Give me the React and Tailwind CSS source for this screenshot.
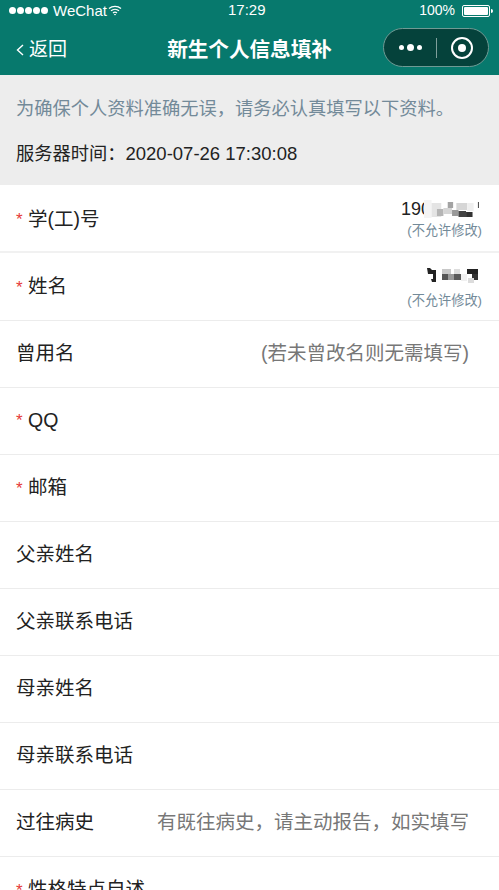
const CJK = '"Liberation Sans","Noto Sans CJK SC",sans-serif';

function Wifi() {
  return (
    <svg width="14" height="11" viewBox="0 0 14 11" fill="none" stroke="#fff" strokeWidth="1.3">
      <path d="M1 3.6C4.4.6 9.6.6 13 3.6" />
      <path d="M3 5.8c2.3-2 5.7-2 8 0" />
      <path d="M5 7.9c1.2-1 2.8-1 4 0" />
      <path d="M7 10.6 5.9 9.3c.6-.5 1.6-.5 2.2 0z" fill="#fff" stroke="none" />
    </svg>
  );
}

function StatusBar() {
  return (
    <div className="h-[20px] flex items-center justify-between pl-[9px] pr-[6px] text-white text-[14px] relative pt-[1px]">
      <div className="flex items-center">
        <div className="flex gap-[1px] mr-[5px]">
          {[0, 1, 2, 3, 4].map((i) => (
            <span key={i} className="w-[7px] h-[7px] rounded-full bg-white" />
          ))}
        </div>
        <span className="leading-none text-[15px]">WeChat</span>
        <span className="ml-[1px] flex"><Wifi /></span>
      </div>
      <span className="absolute left-[228px] top-[1px] text-[15px] leading-[18px]">17:29</span>
      <div className="flex items-center">
        <span className="mr-[7px]">100%</span>
        <div className="w-[28px] h-[12px] border border-white rounded-[2px] p-[1px] flex">
          <div className="flex-1 bg-white rounded-[1px]" />
        </div>
        <div className="w-[2px] h-[4px] bg-white ml-[1px] rounded-r-sm" />
      </div>
    </div>
  );
}

function NavBar() {
  return (
    <div className="h-[55px] flex items-center justify-between pl-[16px] pr-[10px] relative">
      <div className="flex items-center text-white text-[19px] gap-[5px] pt-[5px]">
        <svg width="8" height="12" viewBox="0 0 8 12" fill="none" stroke="#fff" strokeWidth="1.4"><path d="M7 1 1.5 6 7 11" /></svg>
        <span>返回</span>
      </div>
      <div className="absolute inset-x-0 top-0 h-[55px] flex items-center justify-center text-white text-[20.6px] font-bold pt-[5px]">新生个人信息填补</div>
      <div className="w-[106px] h-[39px] rounded-full bg-[#05423b] border border-[#6f9a94] flex items-center">
        <div className="flex items-center gap-[3px] ml-[15px]">
          <span className="w-[5px] h-[5px] rounded-full bg-white" />
          <span className="w-[7px] h-[7px] rounded-full bg-white" />
          <span className="w-[5px] h-[5px] rounded-full bg-white" />
        </div>
        <div className="w-px h-[20px] bg-[#7f9f9b] ml-[14px]" />
        <div className="ml-[14px] w-[22px] h-[22px] rounded-full border-[2.5px] border-white flex items-center justify-center">
          <span className="w-[8px] h-[8px] rounded-full bg-white" />
        </div>
      </div>
    </div>
  );
}

function Mosaic1() {
  return (
    <svg width="55" height="18" viewBox="0 0 51 18" preserveAspectRatio="none" className="-ml-[7px]">
      <rect x="0" y="0" width="7" height="18" fill="#f4f4f4" />
      <rect x="7" y="3" width="9" height="14" fill="#e4e4e4" />
      <rect x="12" y="9" width="6" height="7" fill="#b5b5b5" />
      <rect x="18" y="8" width="8" height="6" fill="#d5d5d5" />
      <rect x="22" y="2" width="5" height="6" fill="#a3a3a3" />
      <rect x="26" y="10" width="6" height="6" fill="#9a9a9a" />
      <rect x="30" y="3" width="10" height="7" fill="#d6d6d6" />
      <rect x="32" y="11" width="7" height="6" fill="#444444" />
      <rect x="39" y="12" width="6" height="5" fill="#333333" />
      <rect x="40" y="3" width="6" height="8" fill="#efefef" />
      <rect x="50" y="2" width="1" height="6" fill="#555555" />
    </svg>
  );
}

function Mosaic2() {
  return (
    <svg width="52" height="18" viewBox="0 0 52 18">
      <path d="M0 1h3l2 2h4v12H5l-1-3h2V7H1z" fill="#222222" />
      <rect x="15" y="2" width="9" height="5" fill="#c8c8c8" />
      <rect x="15" y="7" width="6" height="6" fill="#555555" />
      <rect x="21" y="7" width="6" height="6" fill="#999999" />
      <rect x="27" y="2" width="6" height="5" fill="#dddddd" />
      <rect x="27" y="7" width="7" height="6" fill="#5a5a5a" />
      <rect x="34" y="7" width="6" height="7" fill="#f0f0f0" />
      <rect x="40" y="2" width="11" height="5" fill="#222222" />
      <rect x="45" y="7" width="6" height="6" fill="#333333" />
      <rect x="41" y="11" width="6" height="5" fill="#dcdcdc" />
    </svg>
  );
}

function Row({ label, required, placeholder, locked, mosaic, prefix, h = 'h-[67px]', labelPad = 'pt-[0px]', noteGap = '', lockPad = '', border = 'border-b border-[#ececec]' }) {
  return (
    <div className={`${h} flex items-center justify-between pl-[16px] ${placeholder ? 'pr-[30px]' : 'pr-[17px]'} ${border} shrink-0`}>
      <div className={`flex items-center text-[19.5px] text-[#222222] leading-none ${labelPad}`}>
        {required && <span className="text-[#e5393a] w-[12px] text-[17px]">*</span>}
        <span>{label}</span>
      </div>
      {placeholder && <span className="text-[19.5px] text-[#777777]">{placeholder}</span>}
      {locked && (
        <div className={`flex flex-col items-end ${lockPad}`}>
          <div className="flex items-center h-[24px] text-[18px] text-[#222222] pr-[3px]">
            {prefix && <span className="leading-none">{prefix}</span>}
            {mosaic}
          </div>
          <span className={`text-[13.2px] text-[#738a99] leading-[18px] ${noteGap}`}>(不允许修改)</span>
        </div>
      )}
    </div>
  );
}

export default function App() {
  return (
    <div className="w-[499px] h-[890px] overflow-hidden bg-white flex flex-col" style={{ fontFamily: CJK }}>
      <header className="bg-[#07796d] h-[75px] shrink-0">
        <StatusBar />
        <NavBar />
      </header>
      <section className="bg-[#ededed] h-[110px] shrink-0 px-[16px] pt-[21px]">
        <p className="text-[18.25px] leading-[26px] text-[#738a99]">为确保个人资料准确无误，请务必认真填写以下资料。</p>
        <p className="text-[18.25px] leading-[26px] text-[#222222] mt-[19px]">服务器时间：<span className="text-[18.5px]">2020-07-26 17:30:08</span></p>
      </section>
      <Row required label="学(工)号" locked prefix="190" mosaic={<Mosaic1 />} h="h-[68px]" labelPad="pt-[3px]" noteGap="mt-[1px]" border="border-b-2 border-[#f1f1f1]" />
      <Row required label="姓名" locked mosaic={<Mosaic2 />} h="h-[68px]" labelPad="pt-[1px]" noteGap="mt-[4px]" lockPad="pt-[1px]" />
      <Row label="曾用名" placeholder="(若未曾改名则无需填写)" />
      <Row required label="QQ" labelPad="pb-[1px]" />
      <Row required label="邮箱" />
      <Row label="父亲姓名" />
      <Row label="父亲联系电话" />
      <Row label="母亲姓名" />
      <Row label="母亲联系电话" />
      <Row label="过往病史" placeholder="有既往病史，请主动报告，如实填写" />
      <Row required label="性格特点自述" />
    </div>
  );
}
